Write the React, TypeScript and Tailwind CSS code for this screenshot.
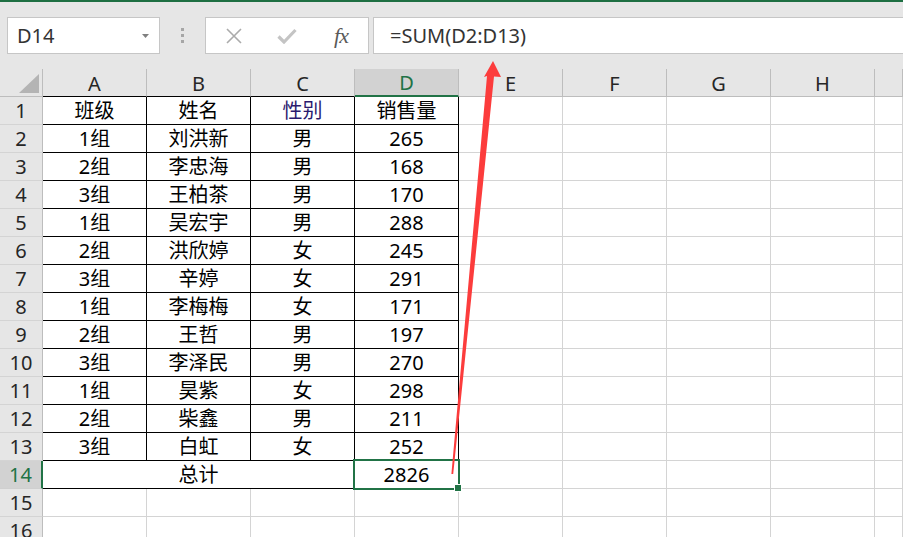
import React from "react";

const data: [string, string, string, string][] = [
  ["班级", "姓名", "性别", "销售量"],
  ["1组", "刘洪新", "男", "265"],
  ["2组", "李忠海", "男", "168"],
  ["3组", "王柏茶", "男", "170"],
  ["1组", "吴宏宇", "男", "288"],
  ["2组", "洪欣婷", "女", "245"],
  ["3组", "辛婷", "女", "291"],
  ["1组", "李梅梅", "女", "171"],
  ["2组", "王哲", "男", "197"],
  ["3组", "李泽民", "男", "270"],
  ["1组", "昊紫", "女", "298"],
  ["2组", "柴鑫", "男", "211"],
  ["3组", "白虹", "女", "252"],
];

const cols = ["A", "B", "C", "D", "E", "F", "G", "H", ""];

function RowHeader({ n }: { n: number }) {
  const sel = n === 14;
  return (
    <div
      className={
        sel
          ? "h-[28px] flex items-center justify-center bg-[#d2d2d2] text-[#217346] border-r-2 border-r-[#217346] border-b border-b-[#cfcfcf]"
          : "h-[28px] flex items-center justify-center bg-[#e6e6e6] text-[#262626] border-r border-r-[#bdbdbd] border-b border-b-[#d4d4d4]"
      }
    >
      {n}
    </div>
  );
}

function Cell({
  text,
  black,
  rightBlack,
  purple,
}: {
  text?: string;
  black: boolean;
  rightBlack: boolean;
  purple?: boolean;
}) {
  return (
    <div
      className={
        "h-[28px] flex items-center justify-center border-r border-b " +
        (black ? "border-b-black " : "border-b-[#d4d4d4] ") +
        (rightBlack ? "border-r-black " : "border-r-[#d4d4d4] ") +
        (purple ? "text-[#2a1a6e]" : "text-black")
      }
    >
      {text}
    </div>
  );
}

export default function App() {
  const rows: React.ReactNode[] = [];
  for (let r = 1; r <= 16; r++) {
    rows.push(<RowHeader key={"h" + r} n={r} />);
    if (r <= 13) {
      const d = data[r - 1];
      for (let c = 0; c < 9; c++) {
        rows.push(
          <Cell
            key={r + "-" + c}
            text={c < 4 ? d[c] : undefined}
            black={c < 4}
            rightBlack={c < 4}
            purple={r === 1 && c === 2}
          />
        );
      }
    } else if (r === 14) {
      rows.push(
        <div
          key="merged"
          className="col-span-3 h-[28px] flex items-center justify-center border-r border-b border-r-black border-b-black text-black"
        >
          总计
        </div>
      );
      rows.push(<Cell key="d14" text="2826" black rightBlack />);
      for (let c = 4; c < 9; c++) {
        rows.push(<Cell key={r + "-" + c} black={false} rightBlack={false} />);
      }
    } else {
      for (let c = 0; c < 9; c++) {
        rows.push(<Cell key={r + "-" + c} black={false} rightBlack={false} />);
      }
    }
  }

  return (
    <div
      className="relative w-[903px] h-[537px] overflow-hidden bg-white text-[20px] leading-none"
      style={{ fontFamily: '"Noto Sans", "Noto Sans CJK SC", sans-serif' }}
    >
      <div className="h-[2px] bg-[#1e6f42]" />
      {/* formula bar */}
      <div className="h-[67px] bg-[#e6e6e6] flex items-start pt-[15px] pl-[7px]">
        <div className="w-[153px] h-[37px] bg-white border border-[#c6c6c6] flex items-center justify-between pl-[9px] pr-[10px] text-[#333333]">
          <span>D14</span>
          <svg width="7" height="4" viewBox="0 0 7 4">
            <path d="M0 0 L7 0 L3.5 4 Z" fill="#808080" />
          </svg>
        </div>
        <div className="w-[45px] h-[37px] flex flex-col items-center justify-center gap-[3px]">
          <div className="w-[3px] h-[3px] bg-[#a6a6a6]" />
          <div className="w-[3px] h-[3px] bg-[#a6a6a6]" />
          <div className="w-[3px] h-[3px] bg-[#a6a6a6]" />
        </div>
        <div className="w-[164px] h-[37px] bg-white border border-[#c6c6c6] flex items-center">
          <div className="w-[54px] flex justify-center pl-[2px]">
            <svg width="18" height="18" viewBox="0 0 18 18">
              <path d="M2 2 L16 16 M16 2 L2 16" stroke="#ababab" strokeWidth="1.6" fill="none" />
            </svg>
          </div>
          <div className="w-[54px] flex justify-center">
            <svg width="20" height="16" viewBox="0 0 20 16">
              <path d="M1.5 8.5 L7 14 L18.5 2" stroke="#c4c4c4" strokeWidth="3.2" fill="none" />
            </svg>
          </div>
          <div
            className="w-[54px] flex justify-center italic text-[22px] text-[#5a5a5a]"
            style={{ fontFamily: '"Liberation Serif", "DejaVu Serif", serif' }}
          >
            <span className="tracking-[-1px]">fx</span>
          </div>
        </div>
        <div className="flex-1 ml-[4px] -mr-[2px] h-[37px] bg-white border border-[#c6c6c6] flex items-center pl-[16px] text-[#333333]">
          =SUM(D2:D13)
        </div>
      </div>
      {/* sheet */}
      <div className="grid grid-cols-[43px_repeat(8,104px)_28px]">
        <div className="h-[28px] bg-[#e6e6e6] border-r border-r-[#bdbdbd] border-b border-b-[#bdbdbd] flex items-end justify-end pr-[3px] pb-[3px]">
          <svg width="20" height="19" viewBox="0 0 20 19">
            <path d="M20 0 L20 19 L0 19 Z" fill="#b4b4b4" />
          </svg>
        </div>
        {cols.map((c, i) =>
          i === 3 ? (
            <div
              key={c}
              className="h-[28px] bg-[#d2d2d2] text-[#217346] border-r border-r-[#bdbdbd] border-b-2 border-b-[#217346] flex items-center justify-center pt-[2px]"
            >
              {c}
            </div>
          ) : (
            <div
              key={"c" + i}
              className={
                "h-[28px] bg-[#e6e6e6] text-[#262626] border-r border-r-[#bdbdbd] border-b flex items-center justify-center pt-[2px] " +
                (i < 3 ? "border-b-black" : "border-b-[#bdbdbd]")
              }
            >
              {c}
            </div>
          )
        )}
        {rows}
      </div>
      {/* selection of D14 */}
      <div className="absolute left-[353px] top-[459px] w-[107px] h-[31px] border-2 border-[#217346] pointer-events-none" />
      <div className="absolute left-[454px] top-[484px] w-[8px] h-[8px] bg-[#217346] border border-white pointer-events-none" />
      {/* red arrow */}
      <svg
        className="absolute left-0 top-0 pointer-events-none"
        width="903"
        height="537"
        viewBox="0 0 903 537"
      >
        <polygon
          points="493,61 501,77 494,76.5 453.2,474 451.4,474 487,76 484,77"
          fill="#fc3c3c"
        />
      </svg>
    </div>
  );
}
